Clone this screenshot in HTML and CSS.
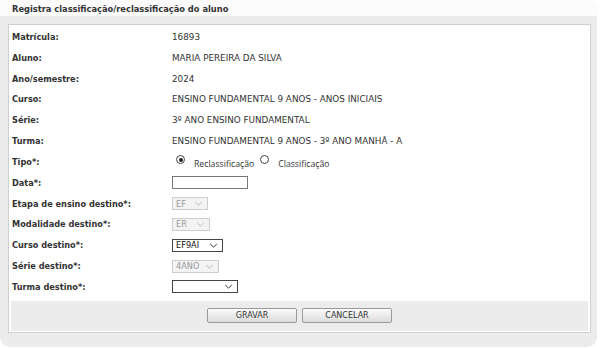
FILE: index.html
```html
<!DOCTYPE html>
<html lang="pt">
<head>
<meta charset="utf-8">
<link rel="stylesheet" href="styles.css">
</head>
<body>
<div class="panel">
  <div class="header">Registra classificação/reclassificação do aluno</div>
  <div class="box">
    <div class="form">
      <div class="lbl">Matrícula:</div><div class="val">16893</div>
      <div class="lbl">Aluno:</div><div class="val">MARIA PEREIRA DA SILVA</div>
      <div class="lbl">Ano/semestre:</div><div class="val">2024</div>
      <div class="lbl">Curso:</div><div class="val">ENSINO FUNDAMENTAL 9 ANOS - ANOS INICIAIS</div>
      <div class="lbl">Série:</div><div class="val">3º ANO ENSINO FUNDAMENTAL</div>
      <div class="lbl">Turma:</div><div class="val">ENSINO FUNDAMENTAL 9 ANOS - 3º ANO MANHÃ - A</div>
      <div class="lbl">Tipo*:</div>
      <div class="val radios">
        <span class="radio checked"></span><span class="rtext">Reclassificação</span>
        <span class="radio"></span><span class="rtext">Classificação</span>
      </div>
      <div class="lbl">Data*:</div><div class="val"><span class="input"></span></div>
      <div class="lbl">Etapa de ensino destino*:</div>
      <div class="val"><span class="select disabled w36"><span class="opt">EF</span><svg class="chev" viewBox="0 0 10 6"><path d="M1 1l4 4 4-4"/></svg></span></div>
      <div class="lbl">Modalidade destino*:</div>
      <div class="val"><span class="select disabled w38"><span class="opt">ER</span><svg class="chev" viewBox="0 0 10 6"><path d="M1 1l4 4 4-4"/></svg></span></div>
      <div class="lbl">Curso destino*:</div>
      <div class="val"><span class="select w51"><span class="opt">EF9AI</span><svg class="chev" viewBox="0 0 10 6"><path d="M1 1l4 4 4-4"/></svg></span></div>
      <div class="lbl">Série destino*:</div>
      <div class="val"><span class="select disabled w47"><span class="opt">4ANO</span><svg class="chev" viewBox="0 0 10 6"><path d="M1 1l4 4 4-4"/></svg></span></div>
      <div class="lbl">Turma destino*:</div>
      <div class="val"><span class="select w66"><span class="opt"></span><svg class="chev" viewBox="0 0 10 6"><path d="M1 1l4 4 4-4"/></svg></span></div>
    </div>
    <div class="bar">
      <span class="btn">GRAVAR</span>
      <span class="btn">CANCELAR</span>
    </div>
  </div>
</div>
</body>
</html>
```
FILE: styles.css
```css
html, body {
  margin: 0;
  padding: 0;
  background: #ffffff;
}
body {
  font-family: "DejaVu Sans", Verdana, sans-serif;
  font-size: 8.8px;
  color: #333333;
}
.panel {
  width: 597px;
  height: 347px;
  box-sizing: border-box;
  background: #ececec;
  border-radius: 6px 10px 10px 10px;
  display: flex;
  flex-direction: column;
  overflow: hidden;
}
.header {
  height: 16px;
  background: #fbfbfb;
  border-radius: 6px 10px 0 0;
  box-sizing: border-box;
  padding-left: 12px;
  line-height: 18px;
  font-weight: bold;
  font-size: 8.3px;
  color: #333;
}
.box {
  margin: 8px 6px 0 8px;
  height: 309px;
  box-sizing: border-box;
  background: #fff;
  border: 1px solid #cfcfcf;
  padding: 1.6px 2px 0 2px;
  display: flex;
  flex-direction: column;
}
.form {
  display: grid;
  grid-template-columns: 161px 1fr;
  grid-auto-rows: 20.83px;
  align-items: center;
}
.lbl {
  padding-left: 1px;
  font-weight: bold;
  font-size: 8.2px;
}
.val {
  display: flex;
  align-items: center;
}
.radios {
  padding-left: 4px;
}
.radio {
  width: 9px;
  height: 9px;
  box-sizing: border-box;
  border: 1px solid #444;
  border-radius: 50%;
  background: #fff;
  display: inline-flex;
  align-items: center;
  justify-content: center;
  margin-top: -4px;
}
.radio.checked::after {
  content: "";
  width: 4px;
  height: 4px;
  border-radius: 50%;
  background: #222;
}
.rtext {
  margin-left: 9px;
  margin-right: 6px;
  margin-top: 4px;
  font-family: "Open Sans", "DejaVu Sans", sans-serif;
  font-size: 8.7px;
}
.input {
  display: block;
  width: 76px;
  height: 13px;
  box-sizing: border-box;
  border: 1px solid #777;
  background: #fff;
}
.select {
  height: 13px;
  box-sizing: border-box;
  border: 1px solid #444;
  background: #fff;
  display: flex;
  align-items: center;
  justify-content: space-between;
  padding: 0 4px 0 3px;
  color: #111;
  font-size: 8.2px;
}
.select.disabled {
  border-color: #cdcdcd;
  background: #f3f3f3;
  color: #999;
}
.chev {
  width: 9px;
  height: 5px;
  fill: none;
  stroke: #333;
  stroke-width: 1.2;
}
.select.disabled .chev {
  stroke: #bbb;
}
.w36 { width: 36px; }
.w38 { width: 38px; }
.w51 { width: 51px; }
.w47 { width: 47px; }
.w66 { width: 66px; }
.bar {
  margin-top: 3.6px;
  height: 29px;
  background: #ececec;
  display: flex;
  justify-content: center;
  align-items: center;
  gap: 5px;
  padding-bottom: 1px;
}
.btn {
  width: 90px;
  height: 15px;
  box-sizing: border-box;
  border: 1px solid #9a9a9a;
  border-radius: 2px;
  background: linear-gradient(#fbfbfb, #dcdcdc);
  display: flex;
  align-items: center;
  justify-content: center;
  font-size: 8px;
  color: #333;
}
```
